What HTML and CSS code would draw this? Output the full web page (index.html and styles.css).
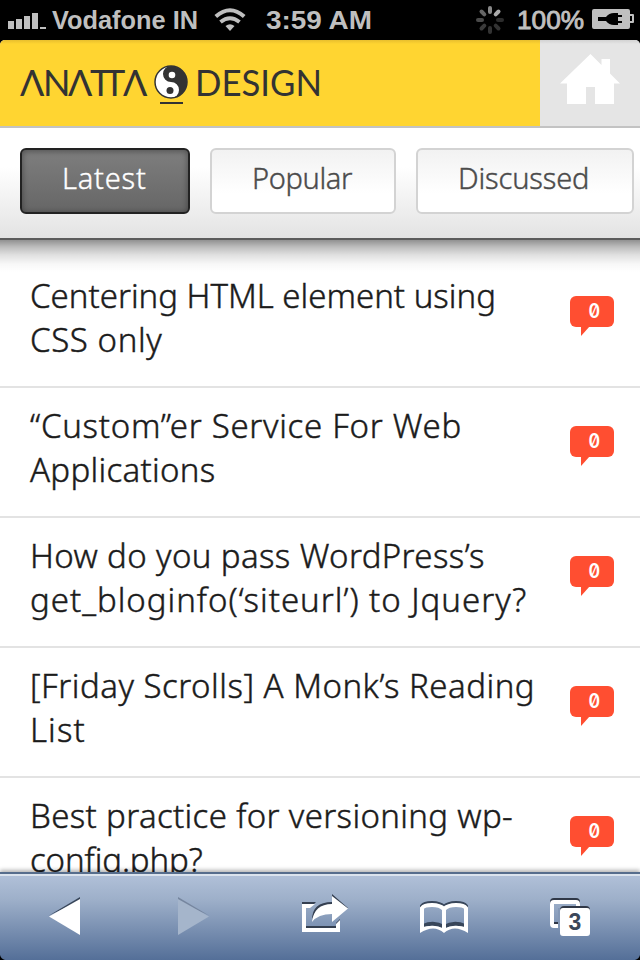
FILE: index.html
```html
<!DOCTYPE html>
<html lang="en">
<head>
<meta charset="utf-8">
<title>Anatta Design</title>
<link rel="stylesheet" href="styles.css">
</head>
<body>
<div class="phone">
  <div class="status">
    <svg width="640" height="40" viewBox="0 0 640 40">
      <g fill="#bfbfbf">
        <path d="M8 21h6v8H8zM16 19h6v10h-6zM24 16h6v13h-6zM32 13h6v16h-6zM40 27h6v2h-6z"/>
        <g class="status-text">
          <text x="52" y="29" textLength="146" lengthAdjust="spacingAndGlyphs">Vodafone IN</text>
          <text x="266" y="29" textLength="106" lengthAdjust="spacingAndGlyphs">3:59 AM</text>
          <text class="percent" x="517" y="29" textLength="67" lengthAdjust="spacingAndGlyphs">100%</text>
        </g>
        <path d="M230 31l-4.500-5q4.500-3.500 9 0z"/>
        <path d="M220.500 22q9.500-7.500 19 0M215.800 16.500q14.200-12.500 28.400 0" fill="none" stroke="#bfbfbf" stroke-width="4"/>
        <path d="M594 9h34q2 0 2 2v3h3q1 0 1 1v7q0 1-1 1h-3v4q0 2-2 2h-34q-2 0-2-2V11q0-2 2-2z"/>
      </g>
      <path d="M598 17h8q3-4 8-4h4v2h4v2h-4v4h4v2h-4v2h-4q-5 0-8-4h-8zM630 16h2v5h-2z"/>
      <g stroke-width="4" stroke-linecap="round">
        <path d="M490 8v4" stroke="#888"/>
        <path d="M495.700 14.300l2.800-2.800" stroke="#aaa"/>
        <path d="M498 20h4" stroke="#2c2c2c"/>
        <path d="M495.700 25.700l2.800 2.800M490 28v4" stroke="#333"/>
        <path d="M484.300 25.700l-2.800 2.800" stroke="#3b3b3b"/>
        <path d="M482 20h-4" stroke="#4a4a4a"/>
        <path d="M484.300 14.300l-2.800-2.800" stroke="#666"/>
      </g>
    </svg>
  </div>
  <header class="header">
    <div class="brand">
      <svg width="360" height="86" viewBox="0 0 360 86" class="logo">
        <text x="20 43 68 90 104 123" y="56">ΛNΛTTΛ</text>
        <text x="195" y="56" textLength="127" lengthAdjust="spacingAndGlyphs">DESIGN</text>
        <circle cx="171" cy="42" r="16" fill="#fff" stroke="#333" stroke-width="1.500"/>
        <path d="M171 26a16 16 0 0 1 0 32a8 8 0 0 0 0-16a8 8 0 0 1 0-16z" fill="#333"/>
        <circle cx="172" cy="35" r="3.300" fill="#fff"/>
        <circle cx="170" cy="50.500" r="3.500" fill="#333"/>
        <path d="M160 62h23v2h-23z" fill="#333"/>
      </svg>
    </div>
    <div class="home">
      <svg width="100" height="86" viewBox="0 0 100 86"><path d="M20 43.500L50.500 14l11 11v-6h8.500v14.500L80 43.500h-6V64H55V47h-9v17H27V43.500z" fill="#fff"/></svg>
    </div>
  </header>
  <nav class="tabs">
    <a class="tab active"><span class="t1">Latest</span></a>
    <a class="tab popular"><span class="t2">Popular</span></a>
    <a class="tab discussed"><span class="t3">Discussed</span></a>
  </nav>
  <main class="list">
    <article class="row first"><h2><span class="l1">Centering HTML element using</span><span class="l2">CSS only</span></h2><span class="bubble"><b>0</b></span></article>
    <article class="row"><h2><span class="l3">“Custom”er Service For Web</span><span class="l4">Applications</span></h2><span class="bubble"><b>0</b></span></article>
    <article class="row"><h2><span class="l5">How do you pass WordPress’s</span><span class="l6">get_bloginfo(‘siteurl’) to Jquery?</span></h2><span class="bubble"><b>0</b></span></article>
    <article class="row"><h2><span class="l7">[Friday Scrolls] A Monk’s Reading</span><span class="l8">List</span></h2><span class="bubble"><b>0</b></span></article>
    <article class="row"><h2><span class="l9">Best practice for versioning wp-</span><span class="l10">config.php?</span></h2><span class="bubble"><b>0</b></span></article>
  </main>
  <footer class="toolbar">
    <svg width="640" height="84" viewBox="0 876 640 84">
      <path d="M49 915.500L80 897v4z" fill="#38465a"/>
      <path d="M49 916.500L80 899v36z" fill="#fff"/>
      <path d="M178 897l31 18.500-31-14z" fill="#76869f"/>
      <path d="M178 899l31 17.500-31 18.500z" fill="#a5b5cb"/>
      <path d="M302 902h14l-3 3h-11zM306 926h30v2h-30zM340 919l-4 4v3h4z" fill="#343f50"/>
      <path d="M302 904h13l-5 4h-4v20h30v-4l4-4v12h-38z" fill="#fff"/>
      <path d="M312 920q0-18 20-18v-8l16 14-16 0v-3q-16 0-20 15z" fill="#343f50"/>
      <path d="M312 922q2-18 20-18v-8l16 12.500-16 13.500v-8q-14 0-20 8z" fill="#fff"/>
      <g fill="none" stroke-width="4">
        <path d="M422 908v-2q2-3 10-3t12 4q4-4 12-4t10 3v2M423 926q11-5 21 1 10-6 21-1" stroke="#38465a"/>
        <path d="M422 929v-21q2-3 10-3t12 4q4-4 12-4t10 3v21M444 908v22" stroke="#fff"/>
      </g>
      <path d="M420 933v-5q14-5 24 1 10-6 24-1v5q-14-9-24 0-10-9-24 0z" fill="#fff"/>
      <rect x="552" y="900" width="26" height="24" rx="2" fill="none" stroke="#303847" stroke-width="4"/>
      <rect x="552" y="902" width="26" height="24" rx="2" fill="none" stroke="#fff" stroke-width="4"/>
      <path d="M558 908h2v20h-2z" fill="#8498b6"/>
      <rect x="560" y="906" width="30" height="29" rx="4" fill="#303847"/>
      <rect x="560" y="908" width="30" height="28" rx="3" fill="#fff"/>
      <text x="575" y="930" class="count" text-anchor="middle">3</text>
      <path d="M0 955q1 4 5 5H0zM640 955q-1 4-5 5h5z" fill="#000"/>
    </svg>
  </footer>
</div>
</body>
</html>
```
FILE: styles.css
```css
* { box-sizing: border-box; }
body { margin: 0; background: #000; }
svg { display: block; }
.phone { width: 640px; height: 960px; overflow: hidden; display: flex; flex-direction: column; background: #000; }
.status { height: 40px; flex: none; }
.status-text { font: bold 26px "Liberation Sans", sans-serif; }
.percent { font-weight: 400; stroke: #bfbfbf; stroke-width: .9px; }
.header { height: 88px; flex: none; display: flex; border-bottom: 2px solid #c3c3c3; border-radius: 5px 5px 0 0; overflow: hidden; background: #e5e5e5; }
.brand { width: 540px; background: linear-gradient(#e8bf2e, #ffd531 4px); }
.home { width: 100px; background: linear-gradient(#d2d2d2, #e5e5e5 4px); }
.logo text { font: 400 36px Lato, "Noto Sans", sans-serif; fill: #333; }
.tabs { height: 112px; flex: none; display: flex; align-items: flex-start; gap: 20px; padding: 20px 0 0 20px; background: linear-gradient(#fff 35%, #e3e3e3); border-bottom: 2px solid #5c5c5c; position: relative; z-index: 1; }
.tabs::after { content: ""; position: absolute; left: 0; right: 0; top: 112px; height: 32px; background: linear-gradient(rgba(0, 0, 0, .43), rgba(0, 0, 0, .26) 7px, rgba(0, 0, 0, .12) 15px, rgba(0, 0, 0, .03) 24px, transparent); }
.tab { height: 66px; flex: none; width: 170px; border: 2px solid #d3d3d3; border-radius: 6px; background: linear-gradient(#f2f2f2, #fff 70%); font: 300 29px/55px "Noto Sans", "Open Sans", sans-serif; color: #4b4b4b; padding-left: 40px; white-space: nowrap; -webkit-text-stroke: .4px; }
.popular { width: 186px; }
.discussed { width: 218px; }
.active { color: #fff; border-color: #222; background: linear-gradient(#7e7e7e, #666); box-shadow: inset 0 1px 6px rgba(0, 0, 0, .4); }
.t1 { letter-spacing: .8px; }
.t2 { letter-spacing: -.35px; }
.t3 { letter-spacing: -.15px; }
.list { flex: 1; min-height: 0; overflow: hidden; background: #fff; }
.row { height: 130px; padding: 17px 0 0 30px; display: flex; border-bottom: 2px solid #e3e3e3; }
.first { height: 148px; padding-top: 35px; }
h2 { margin: -1px 0 0; width: 540px; flex: none; font: 300 33px/44px "Noto Sans", "Open Sans", sans-serif; color: #1b1b1b; white-space: nowrap; -webkit-text-stroke: .45px; }
h2 span { display: block; }
.l2 { letter-spacing: .6px; }
.l3 { letter-spacing: .7px; }
.l4 { letter-spacing: .3px; }
.l5 { letter-spacing: .38px; }
.l6 { letter-spacing: .98px; }
.l7 { letter-spacing: .5px; }
.l8 { letter-spacing: 1.1px; }
.l9 { letter-spacing: .35px; }
.l10 { letter-spacing: -.1px; }
.bubble { width: 44px; height: 31px; margin-top: 21px; border-radius: 6px; background: #ff4e31; position: relative; text-align: center; flex: none; }
.bubble::after { content: ""; position: absolute; left: 11px; top: 30px; border-top: 10px solid #ff4e31; border-right: 9px solid transparent; }
.bubble b { display: block; transform: scaleX(.88); padding-left: 5px; font: 600 20px/31px Inter, sans-serif; font-feature-settings: "zero"; color: #fff; }
.toolbar { height: 88px; flex: none; border-top: 2px solid #566d8c; padding-top: 2px; background: linear-gradient(#dbe3ed 2px, #b0c0d8 2px, #9dafc9 26px, #546f98); box-shadow: 0 -2px 4px rgba(0, 0, 0, .3); position: relative; z-index: 1; }
.count { font: bold 23px "Liberation Sans", sans-serif; fill: #3b4759; }
```
